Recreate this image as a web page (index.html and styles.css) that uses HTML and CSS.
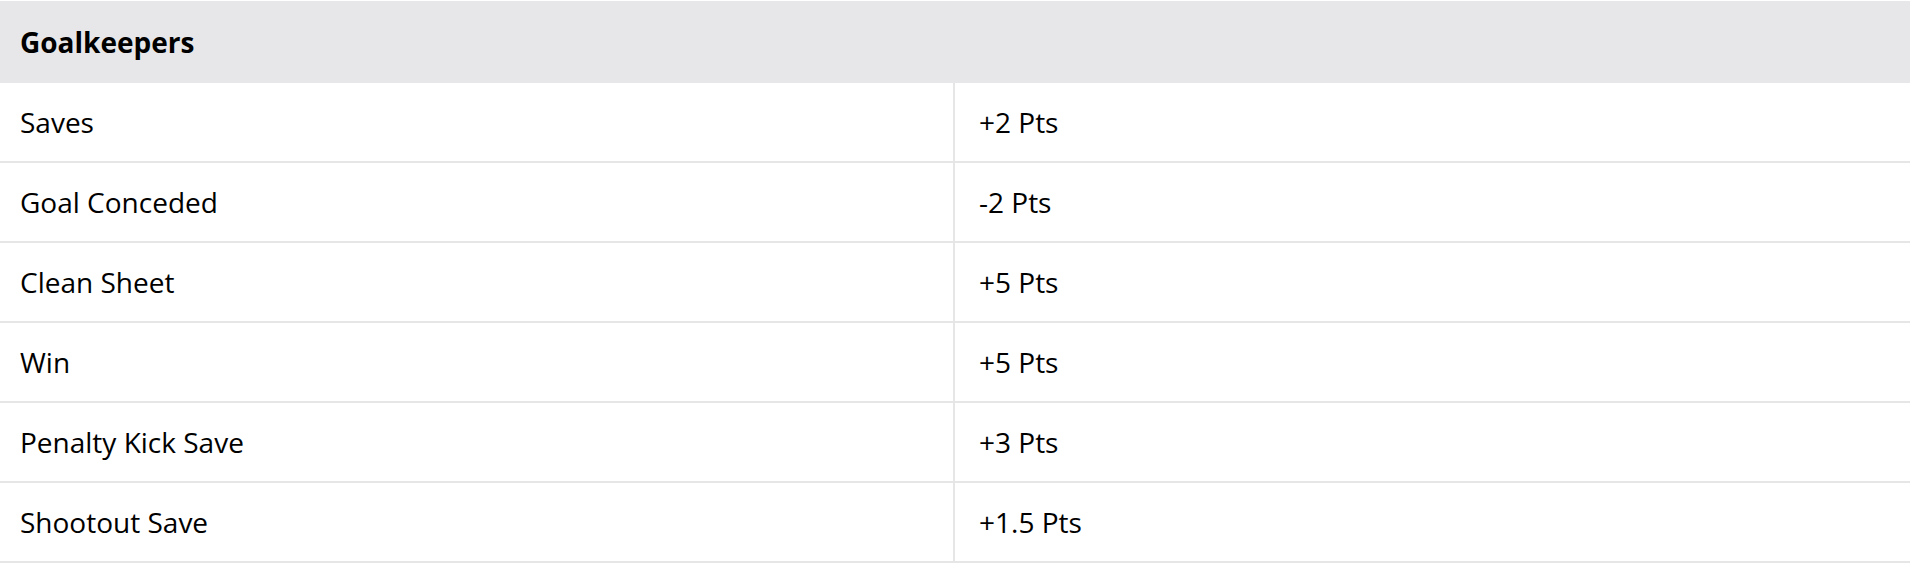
FILE: index.html
```html
<!DOCTYPE html>
<html lang="en">
<head>
<meta charset="utf-8">
<title>Goalkeepers scoring</title>
<link rel="stylesheet" href="styles.css">
</head>
<body>
<div class="scoring">
  <div class="scoring-head">Goalkeepers</div>
  <div class="scoring-row"><div class="cell cell-label">Saves</div><div class="cell cell-value">+2 Pts</div></div>
  <div class="scoring-row"><div class="cell cell-label">Goal Conceded</div><div class="cell cell-value">-2 Pts</div></div>
  <div class="scoring-row"><div class="cell cell-label">Clean Sheet</div><div class="cell cell-value">+5 Pts</div></div>
  <div class="scoring-row"><div class="cell cell-label">Win</div><div class="cell cell-value">+5 Pts</div></div>
  <div class="scoring-row"><div class="cell cell-label">Penalty Kick Save</div><div class="cell cell-value">+3 Pts</div></div>
  <div class="scoring-row"><div class="cell cell-label">Shootout Save</div><div class="cell cell-value">+1.5 Pts</div></div>
</div>
</body>
</html>
```
FILE: styles.css
```css
html, body {
  margin: 0;
  padding: 0;
  background: #ffffff;
}
body {
  font-family: "Open Sans", "Noto Sans", sans-serif;
  font-size: 28px;
  color: #000000;
}
.scoring {
  width: 100%;
  padding-top: 1px;
}
.scoring-head {
  height: 82px;
  box-sizing: border-box;
  background: #e7e7e9;
  padding-left: 20px;
  font-weight: 700;
  display: flex;
  align-items: center;
}
.scoring-row {
  display: grid;
  grid-template-columns: 955px 1fr;
  height: 80px;
  box-sizing: border-box;
  border-bottom: 2px solid #e6e6e6;
}
.cell {
  display: flex;
  align-items: center;
  box-sizing: border-box;
}
.cell-label {
  padding-left: 20px;
  border-right: 2px solid #e6e6e6;
}
.cell-value {
  padding-left: 24px;
}
```
